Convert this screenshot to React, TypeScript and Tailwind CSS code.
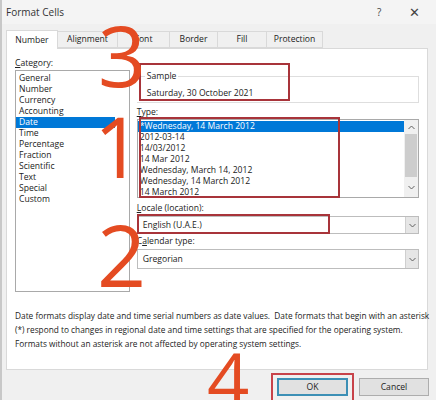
import React from 'react'

const categories = ['General', 'Number', 'Currency', 'Accounting', 'Date', 'Time', 'Percentage', 'Fraction', 'Scientific', 'Text', 'Special', 'Custom']
const types = ['*Wednesday, 14 March 2012', '2012-03-14', '14/03/2012', '14 Mar 2012', 'Wednesday, March 14, 2012', 'Wednesday, 14 March 2012', '14 March 2012']
const tabs = [
  { label: 'Number', w: 'w-[52px]' },
  { label: 'Alignment', w: 'w-[60px]' },
  { label: 'Font', w: 'w-[52px]' },
  { label: 'Border', w: 'w-[48px]' },
  { label: 'Fill', w: 'w-[49px]' },
  { label: 'Protection', w: 'w-[56px]' },
]

function Chevron({ up = false }: { up?: boolean }) {
  return (
    <svg width="7" height="5" viewBox="0 0 7 5" className={up ? 'rotate-180' : ''}>
      <path d="M0.5 1 L3.5 4 L6.5 1" fill="none" stroke="#606060" strokeWidth="1" />
    </svg>
  )
}

function Dropdown({ value, h }: { value: string; h: string }) {
  return (
    <div className={`flex ${h} border border-[#bdbdbd] bg-white`}>
      <div className="flex-1 flex items-center pl-[5px]">{value}</div>
      <div className="w-[13px] flex items-center justify-center bg-[#e6e6e6] border-l border-[#cfcfcf]">
        <Chevron />
      </div>
    </div>
  )
}

export default function App() {
  return (
    <div className="relative w-[436px] h-[400px] overflow-hidden bg-[#f0f0f0] text-[8.6px] text-[#222] font-['Open_Sans',sans-serif] border-l-2 border-[#c8c8c8]">
      {/* title bar */}
      <div className="flex items-center h-[24px] pl-[4px] pr-[16px] bg-[#f4f4f4]">
        <div className="flex-1 text-[10px] text-[#333]">Format Cells</div>
        <div className="w-[16px] text-[10px] text-[#444] mr-[16px]">?</div>
        <div className="text-[13px] text-[#444] leading-none">✕</div>
      </div>

      {/* tabs */}
      <div className="flex items-end h-[24px] pl-[4px] pt-[6px]">
        {tabs.map((t, i) => (
          <div
            key={t.label}
            className={
              i === 0
                ? `${t.w} h-[19px] flex items-center justify-center bg-white border border-b-0 border-[#d9d9d9] -mb-px z-10`
                : `${t.w} h-[17px] flex items-center justify-center bg-[#f0f0f0] border border-l-0 border-[#d9d9d9]`
            }
          >
            {t.label}
          </div>
        ))}
      </div>

      {/* panel */}
      <div className="ml-[4px] mr-[8px] h-[322px] bg-white border border-[#d9d9d9] pt-[8px] px-[8px]">
        <div className="flex">
          <div className="w-[115px]">
            <div className="h-[12px] leading-[12px] mb-[1px]"><span className="underline">C</span>ategory:</div>
            <div className="relative h-[222px] border border-[#a9a9a9] pt-[2px]">
              {categories.map((c) => (
                <div key={c} className={c === 'Date' ? 'h-[11px] leading-[11px] pl-[3px] mr-[14px] bg-[#0078d7] text-white' : 'h-[11px] leading-[11px] pl-[3px]'}>
                  {c}
                </div>
              ))}
              <div className="absolute right-[3px] bottom-[3px] opacity-40"><Chevron /></div>
            </div>
          </div>

          <div className="ml-[7px] w-[283px]">
            {/* sample */}
            <div className="mt-[19px] h-[27px] border-t border-r border-b border-[#dedede] relative">
              <div className="absolute -top-[6px] left-[8px] bg-white px-[2px] leading-[11px]">Sample</div>
              <div className="pt-[11px] pl-[10px] leading-[11px]">Saturday, 30 October 2021</div>
            </div>

            <div className="mt-[3px] h-[12px] leading-[12px] mb-[1px]"><span className="underline">T</span>ype:</div>
            <div className="flex h-[79px] border border-[#a9a9a9]">
              <div className="flex-1 pt-[1px]">
                {types.map((t, i) => (
                  <div key={t} className={i === 0 ? 'h-[11px] leading-[11px] pl-[2px] bg-[#0078d7] text-white' : 'h-[11px] leading-[11px] pl-[2px]'}>
                    {t}
                  </div>
                ))}
              </div>
              <div className="w-[14px] flex flex-col items-center bg-[#f0f0f0]">
                <div className="h-[14px] flex items-center"><Chevron up /></div>
                <div className="w-[12px] h-[43px] bg-[#cdcdcd]" />
                <div className="flex-1 flex items-center"><Chevron /></div>
              </div>
            </div>

            <div className="mt-[4px] h-[12px] leading-[12px] mb-[2px]"><span className="underline">L</span>ocale (location):</div>
            <Dropdown value="English (U.A.E.)" h="h-[18px]" />

            <div className="mt-[1px] h-[12px] leading-[12px] mb-[2px]">C<span className="underline">a</span>lendar type:</div>
            <Dropdown value="Gregorian" h="h-[20px]" />
          </div>
        </div>

        <div className="mt-[17px] leading-[14px] text-[8.3px] whitespace-nowrap">
          <div>Date formats display date and time serial numbers as date values.&nbsp; Date formats that begin with an asterisk</div>
          <div>(*) respond to changes in regional date and time settings that are specified for the operating system.</div>
          <div>Formats without an asterisk are not affected by operating system settings.</div>
        </div>
      </div>

      {/* buttons */}
      <div className="flex justify-end gap-[11px] pr-[7px] pt-[8px]">
        <div className="w-[71px] h-[18px] flex items-center justify-center bg-[#e1e1e1] border-2 border-[#3c8fb5]">OK</div>
        <div className="w-[70px] h-[18px] flex items-center justify-center bg-[#e1e1e1] border border-[#adadad]">Cancel</div>
      </div>

      {/* annotations */}
      <div className="absolute left-[137px] top-[63px] w-[151px] h-[38px] border-2 border-[#a8343a]" />
      <div className="absolute left-[137px] top-[117px] w-[201px] h-[81px] border-2 border-[#a8343a]" />
      <div className="absolute left-[135px] top-[214px] w-[193px] h-[20px] border-2 border-[#a8343a]" />
      <div className="absolute left-[269px] top-[373px] w-[83px] h-[40px] border-2 border-[#c8434a]" />

      <div className="absolute left-[96px] top-[13px] text-[84px] leading-none font-medium text-[#e44b22]">3</div>
      <div className="absolute left-[92px] top-[104px] text-[84px] leading-none font-medium text-[#e44b22]">1</div>
      <div className="absolute left-[95px] top-[211px] text-[86px] leading-none font-medium text-[#e44b22]">2</div>
      <div className="absolute left-[205px] top-[341px] text-[74px] leading-none font-medium text-[#e44b22]">4</div>
    </div>
  )
}
